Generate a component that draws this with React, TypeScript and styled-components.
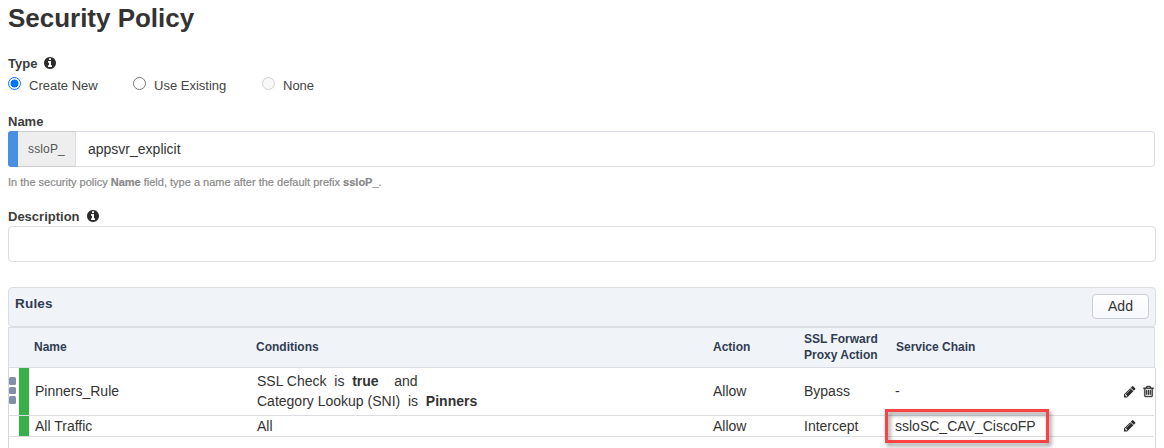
import React from "react";
import styled, { createGlobalStyle } from "styled-components";

const GlobalStyle = createGlobalStyle`
  * { box-sizing: border-box; }
  html, body { margin: 0; padding: 0; background: #fff; }
  body {
    height: 448px;
    overflow: hidden;
    font-family: "Liberation Sans", Arial, sans-serif;
    font-size: 13px;
    color: #333;
  }
`;

const Page = styled.main`
  display: flex;
  flex-direction: column;
  height: 448px;
  padding: 0 8px;
  overflow: hidden;
`;

const Title = styled.h1`
  margin: 0;
  height: 54px;
  padding-top: 2px;
  font-size: 26px;
  line-height: 32px;
  font-weight: bold;
  letter-spacing: -0.02px;
  color: #333;
`;

const FieldLabel = styled.div<{ $top?: number }>`
  display: flex;
  align-items: center;
  height: 18px;
  margin-top: ${(p) => p.$top ?? 0}px;
  font-weight: bold;
  font-size: 13px;
  color: #3c3c3c;
  svg { margin-left: 6px; }
`;

const Icon = styled.svg<{ $size: number }>`
  display: block;
  flex: none;
  width: ${(p) => p.$size}px;
  height: ${(p) => p.$size}px;
  fill: #2b2b2b;
`;

const RadioRow = styled.div`
  display: flex;
  height: 24px;
`;

const RadioOption = styled.label<{ $width: number }>`
  display: flex;
  width: ${(p) => p.$width}px;
  line-height: 27px;
  color: #444;
  white-space: nowrap;
`;

const Radio = styled.input`
  appearance: none;
  flex: none;
  width: 13px;
  height: 13px;
  margin: 5px 8px 0 0;
  border: 1px solid #767676;
  border-radius: 50%;
  background: #fff;
  &:checked {
    border-color: #0075ff;
    background: radial-gradient(circle, #0075ff 3.7px, #fff 4.3px);
  }
  &:disabled { border-color: #d1d1d1; background: #f8f8f8; }
`;

const NameField = styled.div`
  display: flex;
  height: 36px;
  width: 1147px;
  margin-top: 1px;
`;

const Required = styled.span`
  width: 10px;
  background: #4a90e2;
  border-radius: 3px 0 0 3px;
`;

const Prefix = styled.span`
  width: 58px;
  padding-left: 10px;
  border: solid #ccc;
  border-width: 1px 1px 1px 0;
  border-right-color: #dcdce4;
  background: #eee;
  color: #555;
  font-size: 12px;
  line-height: 34px;
  letter-spacing: 0.15px;
`;

const Input = styled.input`
  flex: 1;
  min-width: 0;
  padding: 0 12px;
  border: 1px solid #dcdce4;
  border-left: 0;
  border-radius: 0 4px 4px 0;
  outline: 0;
  font: 14px "Liberation Sans", Arial, sans-serif;
  color: #333;
`;

const DescriptionInput = styled(Input)`
  flex: none;
  height: 36px;
  width: 1148px;
  margin-top: 1px;
  border-left: 1px solid #dcdce4;
  border-radius: 4px;
`;

const Hint = styled.p`
  margin: 6px 0 0;
  height: 19px;
  font-size: 11px;
  line-height: 18px;
  -webkit-text-stroke: 0.2px #888;
  color: #888;
`;

const RulesBar = styled.header`
  display: flex;
  justify-content: space-between;
  align-items: flex-start;
  flex: none;
  height: 40px;
  margin-top: 25px;
  padding: 6px 6px 0;
  border: 1px solid #dadee3;
  border-radius: 4px;
  background: #f0f4f9;
`;

const RulesTitle = styled.h2`
  margin: 0;
  font-size: 13.5px;
  line-height: 19px;
  letter-spacing: 0.2px;
  color: #313c52;
`;

const AddButton = styled.button`
  width: 57px;
  height: 25px;
  padding: 0;
  border: 1px solid #cacdd6;
  border-radius: 4px;
  background: linear-gradient(#fff, #f7f8fb);
  font: 14px "Liberation Sans", Arial, sans-serif;
  line-height: 21px;
  color: #333;
`;

const columns = "10px 10px 228px 456px 91px 91px 228px 31px";

const TableHead = styled.div`
  display: grid;
  grid-template-columns: ${columns};
  align-items: center;
  flex: none;
  width: 1147px;
  height: 41px;
  padding-bottom: 2px;
  border: 1px solid #dadee3;
  background: #f0f4f9;
`;

const HeadCell = styled.div<{ $indent?: number; $shift?: number }>`
  margin-left: ${(p) => p.$shift ?? 0}px;
  padding-left: ${(p) => p.$indent ?? 0}px;
  font-size: 12px;
  font-weight: bold;
  line-height: 16px;
  color: #313c52;
  white-space: nowrap;
`;

const TableBody = styled.div`
  flex: 1;
  width: 1148px;
  padding-right: 1px;
  border: solid #d5d8dd;
  border-width: 0 1px 0 1px;
`;

const Row = styled.div<{ $height: number }>`
  display: grid;
  grid-template-columns: ${columns};
  height: ${(p) => p.$height}px;
  border-bottom: 1px solid #dadee3;
`;

const Handle = styled.div`
  display: flex;
  flex-direction: column;
  gap: 2px;
  padding-top: 9px;
`;

const Grip = styled.span`
  width: 7px;
  height: 7.5px;
  border-radius: 1.5px;
  background: #8190a8;
`;

const Status = styled.div`
  background: #37b049;
`;

const Cell = styled.div<{ $indent?: number; $tall?: boolean }>`
  position: relative;
  display: flex;
  flex-direction: column;
  justify-content: center;
  padding-left: ${(p) => p.$indent ?? 0}px;
  padding-bottom: ${(p) => (p.$tall ? 2 : 0)}px;
  font-size: 14px;
  line-height: 20px;
  color: #333;
  white-space: pre;
`;

const Actions = styled.div`
  display: flex;
  align-items: center;
  gap: 5.5px;
`;

const Highlight = styled.span`
  position: absolute;
  left: -10px;
  top: -7px;
  width: 164px;
  height: 34px;
  border: 3px solid #fa4444;
  filter: drop-shadow(2px 3px 2px rgba(0, 0, 0, 0.45));
  pointer-events: none;
`;

const paths = {
  info: "M1152 1376v-160q0-14-9-23t-23-9h-96v-512q0-14-9-23t-23-9h-320q-14 0-23 9t-9 23v160q0 14 9 23t23 9h96v320h-96q-14 0-23 9t-9 23v160q0 14 9 23t23 9h448q14 0 23-9t9-23zm-128-896v-160q0-14-9-23t-23-9h-192q-14 0-23 9t-9 23v160q0 14 9 23t23 9h192q14 0 23-9t9-23zm640 416q0 209-103 385.5t-279.5 279.5-385.5 103-385.5-103-279.5-279.5-103-385.5 103-385.5 279.5-279.5 385.5-103 385.5 103 279.5 279.5 103 385.5z",
  pencil: "M491 1536l91-91-235-235-91 91v107h128v128h107zm523-928q0-22-22-22-10 0-17 7l-542 542q-7 7-7 17 0 22 22 22 10 0 17-7l542-542q7-7 7-17zm-54-192l416 416-832 832h-416v-416zm683 96q0 53-37 90l-166 166-416-416 166-165q36-38 90-38 53 0 91 38l235 234q37 39 37 91z",
  trash: "M704 736v576q0 14-9 23t-23 9h-64q-14 0-23-9t-9-23v-576q0-14 9-23t23-9h64q14 0 23 9t9 23zm256 0v576q0 14-9 23t-23 9h-64q-14 0-23-9t-9-23v-576q0-14 9-23t23-9h64q14 0 23 9t9 23zm256 0v576q0 14-9 23t-23 9h-64q-14 0-23-9t-9-23v-576q0-14 9-23t23-9h64q14 0 23 9t9 23zm128 724v-948h-896v948q0 22 7 40.5t14.5 27 10.5 8.5h832q3 0 10.5-8.5t14.5-27 7-40.5zm-672-1076h448l-48-117q-7-9-17-11h-317q-10 2-17 11zm928 32v64q0 14-9 23t-23 9h-96v948q0 83-47 143.5t-113 60.5h-832q-66 0-113-58.5t-47-141.5v-952h-96q-14 0-23-9t-9-23v-64q0-14 9-23t23-9h309l70-167q15-37 54-63t79-26h320q40 0 79 26t54 63l70 167h309q14 0 23 9t9 23z",
};

function Glyph({ name, size = 13 }: { name: keyof typeof paths; size?: number }) {
  return (
    <Icon viewBox="0 0 1792 1792" $size={size} aria-hidden="true">
      <path d={paths[name]} stroke="#2b2b2b" strokeWidth={name === "trash" ? 50 : 0} />
    </Icon>
  );
}

export default function App() {
  return (
    <>
      <GlobalStyle />
      <Page>
        <Title>Security Policy</Title>
        <FieldLabel>Type<Glyph name="info" size={14} /></FieldLabel>
        <RadioRow>
          <RadioOption $width={125}><Radio type="radio" name="type" defaultChecked />Create New</RadioOption>
          <RadioOption $width={129}><Radio type="radio" name="type" />Use Existing</RadioOption>
          <RadioOption $width={80}><Radio type="radio" name="type" disabled />None</RadioOption>
        </RadioRow>

        <FieldLabel $top={16}>Name</FieldLabel>
        <NameField>
          <Required />
          <Prefix>ssloP_</Prefix>
          <Input defaultValue="appsvr_explicit" />
        </NameField>
        <Hint>In the security policy <b>Name</b> field, type a name after the default prefix <b>ssloP_</b>.</Hint>

        <FieldLabel $top={15}>Description<Glyph name="info" size={14} /></FieldLabel>
        <DescriptionInput />

        <RulesBar>
          <RulesTitle>Rules</RulesTitle>
          <AddButton>Add</AddButton>
        </RulesBar>
        <TableHead>
          <HeadCell />
          <HeadCell />
          <HeadCell $indent={5}>Name</HeadCell>
          <HeadCell $shift={-1}>Conditions</HeadCell>
          <HeadCell>Action</HeadCell>
          <HeadCell>SSL Forward<br />Proxy Action</HeadCell>
          <HeadCell $indent={1}>Service Chain</HeadCell>
          <HeadCell />
        </TableHead>
        <TableBody>
          <Row $height={48}>
            <Handle><Grip /><Grip /><Grip /></Handle>
            <Status />
            <Cell $tall $indent={6}>Pinners_Rule</Cell>
            <Cell $tall>
              <span>SSL Check  is  <b>true</b>    and</span>
              <span>Category Lookup (SNI)  is  <b>Pinners</b></span>
            </Cell>
            <Cell $tall>Allow</Cell>
            <Cell $tall>Bypass</Cell>
            <Cell $tall>-</Cell>
            <Actions><Glyph name="pencil" size={13.5} /><Glyph name="trash" /></Actions>
          </Row>
          <Row $height={21}>
            <div />
            <Status />
            <Cell $indent={6}>All Traffic</Cell>
            <Cell>All</Cell>
            <Cell>Allow</Cell>
            <Cell>Intercept</Cell>
            <Cell>ssloSC_CAV_CiscoFP<Highlight /></Cell>
            <Actions><Glyph name="pencil" size={13.5} /></Actions>
          </Row>
        </TableBody>
      </Page>
    </>
  );
}
